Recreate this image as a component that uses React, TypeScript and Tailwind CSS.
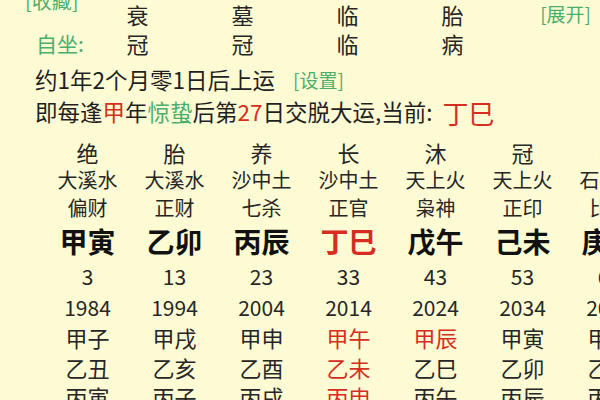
const FONT = "font-['Noto_Sans_CJK_SC','Noto_Sans',sans-serif]";

const TOP_ROWS = [
  { label: '', cells: ['衰', '墓', '临', '胎'] },
  { label: '自坐:', cells: ['冠', '冠', '临', '病'] },
];

type Column = {
  stage: string;
  nayin: string;
  god: string;
  pillar: string;
  age: number;
  year: number;
  years: string[];
  current?: boolean;
  redYears?: number;
};

const COLUMNS: Column[] = [
  { stage: '绝', nayin: '大溪水', god: '偏财', pillar: '甲寅', age: 3, year: 1984, years: ['甲子', '乙丑', '丙寅'] },
  { stage: '胎', nayin: '大溪水', god: '正财', pillar: '乙卯', age: 13, year: 1994, years: ['甲戌', '乙亥', '丙子'] },
  { stage: '养', nayin: '沙中土', god: '七杀', pillar: '丙辰', age: 23, year: 2004, years: ['甲申', '乙酉', '丙戌'] },
  { stage: '长', nayin: '沙中土', god: '正官', pillar: '丁巳', age: 33, year: 2014, years: ['甲午', '乙未', '丙申'], current: true, redYears: 3 },
  { stage: '沐', nayin: '天上火', god: '枭神', pillar: '戊午', age: 43, year: 2024, years: ['甲辰', '乙巳', '丙午'], redYears: 1 },
  { stage: '冠', nayin: '天上火', god: '正印', pillar: '己未', age: 53, year: 2034, years: ['甲寅', '乙卯', '丙辰'] },
  { stage: '临', nayin: '石榴木', god: '比肩', pillar: '庚申', age: 63, year: 2044, years: ['甲子', '乙丑', '丙寅'] },
];

function DayunColumn({ col }: { col: Column }) {
  const red = 'text-[#d62d22]';
  const ink = 'text-[#262626]';
  return (
    <div className="flex flex-col items-center whitespace-nowrap">
      <div className={`flex h-[28px] items-center text-[22px] ${ink}`}>{col.stage}</div>
      <div className={`flex h-[28px] items-center text-[20px] ${ink}`}>{col.nayin}</div>
      <div className={`flex h-[27px] items-center text-[20px] ${ink}`}>{col.god}</div>
      <div className={`flex h-[40px] items-center text-[28px] font-bold ${col.current ? red : 'text-[#111]'}`}>
        {col.pillar}
      </div>
      <div className={`flex h-[32px] items-center text-[21px] ${ink}`}>{col.age}</div>
      <div className={`flex h-[30px] items-center text-[21px] ${ink}`}>{col.year}</div>
      {col.years.map((y, i) => (
        <div
          key={y}
          className={`flex h-[29.5px] items-center text-[22px] ${i < (col.redYears ?? 0) ? red : ink}`}
        >
          {y}
        </div>
      ))}
    </div>
  );
}

export default function App() {
  return (
    <div className={`relative h-[400px] w-[600px] overflow-hidden bg-[#fdfbd3] ${FONT}`}>
      <div className="-mt-[10px] flex h-[22px] items-center pl-[25px] text-[20px] text-[#4cae6c]">[收藏]</div>

      <div className="-mt-[12px] grid grid-cols-[85px_repeat(4,105px)_1fr]">
        {TOP_ROWS.map((row, r) => (
          <div key={r} className="contents">
            <div className="flex h-[29px] items-center pl-[36px] text-[21px] text-[#4cae6c]">{row.label}</div>
            {row.cells.map((c, i) => (
              <div key={i} className="flex h-[29px] items-center justify-center text-[22px] text-[#262626]">
                {c}
              </div>
            ))}
            <div className="flex h-[29px] items-center justify-end pr-[9px] text-[19px] text-[#4cae6c]">
              {r === 0 ? '[展开]' : ''}
            </div>
          </div>
        ))}
      </div>

      <div className="mt-[6px] flex h-[32px] items-center pl-[35px] text-[22.5px] text-[#1f1f1f]">
        约1年2个月零1日后上运
        <span className="ml-[18px] text-[19px] text-[#4cae6c]">[设置]</span>
      </div>
      <div className="flex h-[32px] items-center whitespace-nowrap pl-[35px] text-[22.5px] text-[#1f1f1f]">
        即每逢<span className="text-[#d62d22]">甲</span>年<span className="text-[#4cae6c]">惊蛰</span>后第
        <span className="text-[#d62d22]">27</span>日交脱大运,当前:
        <span className="ml-[10px] text-[26px] text-[#d62d22]">丁巳</span>
      </div>

      <div className="mt-[10px] grid grid-cols-[repeat(7,87px)] pl-[44px]">
        {COLUMNS.map((col) => (
          <DayunColumn key={col.year} col={col} />
        ))}
      </div>
    </div>
  );
}
